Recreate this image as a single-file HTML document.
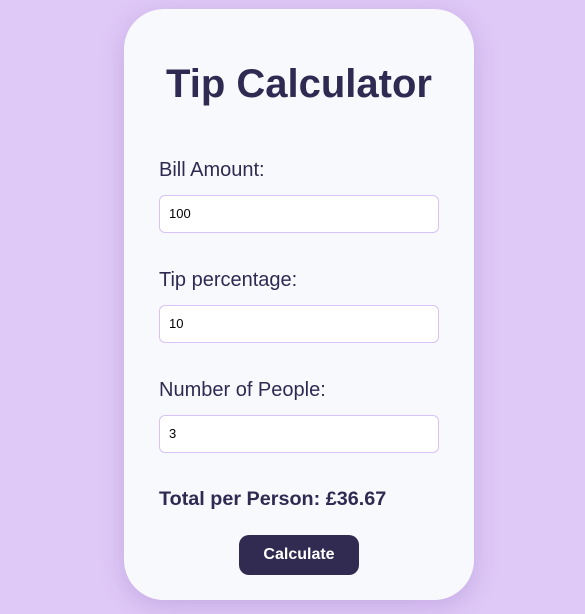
<!DOCTYPE html>
<html><head><style>
html,body{margin:0;padding:0}
body{width:585px;height:614px;background:#dfc9f7;font-family:"Liberation Sans",sans-serif;position:relative;overflow:hidden}
.card{position:absolute;left:124px;top:9px;width:350px;height:591px;background:#f8f9fd;border-radius:40px;box-shadow:0 6px 24px rgba(120,80,170,0.25)}
h1{position:absolute;left:0;width:350px;top:53px;margin:0;text-align:center;font-size:40px;font-weight:bold;color:#2f2a52}
.lbl{position:absolute;left:35px;font-size:20px;color:#2f2a52}
.inp{position:absolute;left:35px;height:36px;border:1px solid #d7c3f6;border-radius:6px;background:#fff;font-size:13px;line-height:36px;padding-left:9px;box-sizing:content-box;width:269px;color:#000}
.tot{position:absolute;left:35px;top:479px;font-size:19.8px;font-weight:bold;color:#2f2a52}
.btn{position:absolute;left:115px;top:526px;width:120px;height:40px;border-radius:10px;background:#312b52;color:#fff;font-weight:bold;font-size:16px;text-align:center;line-height:40px}
</style></head><body>
<div class="card">
<h1>Tip Calculator</h1>
<div class="lbl" style="top:150px">Bill Amount:</div>
<div class="inp" style="top:186px">100</div>
<div class="lbl" style="top:260px">Tip percentage:</div>
<div class="inp" style="top:296px">10</div>
<div class="lbl" style="top:370px">Number of People:</div>
<div class="inp" style="top:406px">3</div>
<div class="tot">Total per Person: £36.67</div>
<div class="btn">Calculate</div>
</div>
</body></html>
